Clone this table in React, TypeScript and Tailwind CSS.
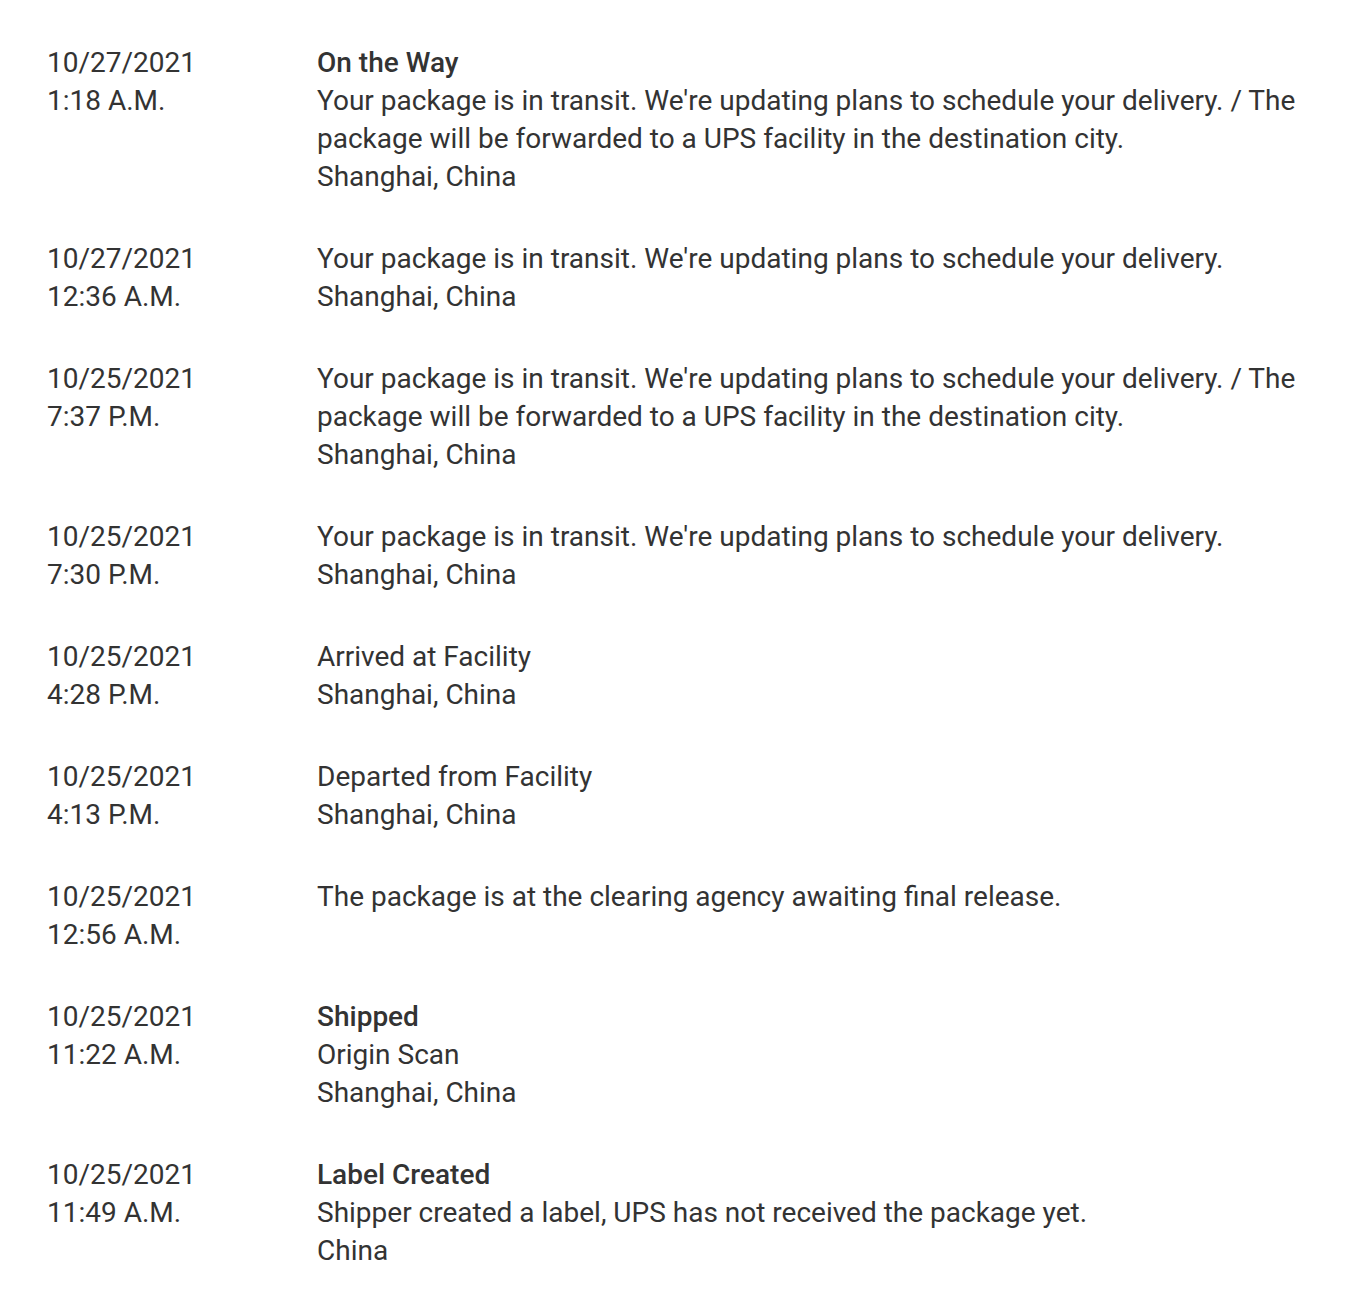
import React from 'react';

type Row = {
	date: string;
	time: string;
	title?: string;
	lines: string[];
};

const rows: Row[] = [
	{
		date: '10/27/2021',
		time: '1:18 A.M.',
		title: 'On the Way',
		lines: [
			"Your package is in transit. We're updating plans to schedule your delivery. / The package will be forwarded to a UPS facility in the destination city.",
			'Shanghai, China',
		],
	},
	{
		date: '10/27/2021',
		time: '12:36 A.M.',
		lines: ["Your package is in transit. We're updating plans to schedule your delivery.", 'Shanghai, China'],
	},
	{
		date: '10/25/2021',
		time: '7:37 P.M.',
		lines: [
			"Your package is in transit. We're updating plans to schedule your delivery. / The package will be forwarded to a UPS facility in the destination city.",
			'Shanghai, China',
		],
	},
	{
		date: '10/25/2021',
		time: '7:30 P.M.',
		lines: ["Your package is in transit. We're updating plans to schedule your delivery.", 'Shanghai, China'],
	},
	{ date: '10/25/2021', time: '4:28 P.M.', lines: ['Arrived at Facility', 'Shanghai, China'] },
	{ date: '10/25/2021', time: '4:13 P.M.', lines: ['Departed from Facility', 'Shanghai, China'] },
	{
		date: '10/25/2021',
		time: '12:56 A.M.',
		lines: ['The package is at the clearing agency awaiting final release.'],
	},
	{ date: '10/25/2021', time: '11:22 A.M.', title: 'Shipped', lines: ['Origin Scan', 'Shanghai, China'] },
	{
		date: '10/25/2021',
		time: '11:49 A.M.',
		title: 'Label Created',
		lines: ['Shipper created a label, UPS has not received the package yet.', 'China'],
	},
];

const App: React.FC = () => {
	return (
		<div
			className="w-[1372px] min-h-[1298px] bg-white text-[#333333] text-[28px] leading-[38px] pl-[47px] pt-[44px] pb-[28px]"
			style={{ fontFamily: 'Roboto, "Liberation Sans", sans-serif' }}
		>
			<div className="flex flex-col gap-[44px]">
				{rows.map((row, i) => (
					<div key={i} className="flex">
						<div className="w-[270px] shrink-0">
							<div>{row.date}</div>
							<div>{row.time}</div>
						</div>
						<div className="w-[1010px]">
							{row.title && <div className="font-medium">{row.title}</div>}
							{row.lines.map((line, j) => (
								<div key={j}>{line}</div>
							))}
						</div>
					</div>
				))}
			</div>
		</div>
	);
};

export default App;
